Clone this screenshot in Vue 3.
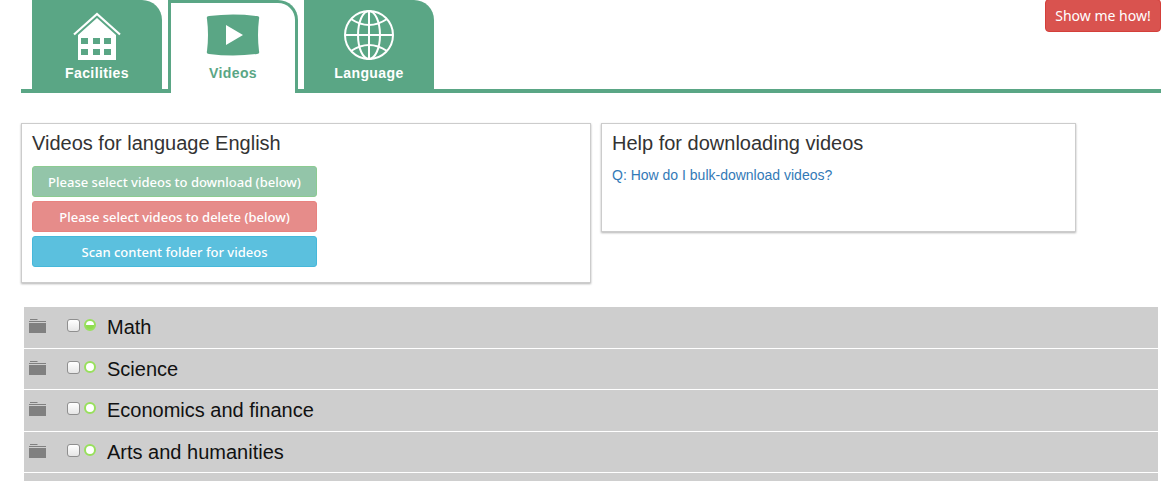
<script setup>
const rows = [
  { name: 'Math', partial: true },
  { name: 'Science', partial: false },
  { name: 'Economics and finance', partial: false },
  { name: 'Arts and humanities', partial: false },
  { name: '', partial: false, hidden: true },
]
</script>

<template>
  <div class="page">
    <header class="header">
      <nav class="tabs">
        <a class="tab">
          <svg class="icon" viewBox="0 0 50 50" width="50" height="50">
            <path d="M2 24.5 L25 4 L48 24.5" fill="none" stroke="#fff" stroke-width="2.2"/>
            <path fill-rule="evenodd" fill="#fff" d="M25 8 L44 25 V50 H6 V25 Z M9 28 v6 h7 v-6 z M21 28 v6 h7 v-6 z M32 28 v6 h7 v-6 z M9 39 v6 h7 v-6 z M21 39 v6 h7 v-6 z M32 39 v6 h7 v-6 z"/>
          </svg>
          <span>Facilities</span>
        </a>
        <a class="tab active">
          <svg class="icon" viewBox="0 0 54 50" width="54" height="50">
            <path fill="#5aa685" d="M3 6 Q27 3 51 6 Q54 6 53 9 Q51 25 53 41 Q54 44 51 44 Q27 47 3 44 Q0 44 1 41 Q3 25 1 9 Q0 6 3 6 Z"/>
            <path fill="#fff" d="M20 15 L37 25 L20 35 Z"/>
          </svg>
          <span>Videos</span>
        </a>
        <a class="tab">
          <svg class="icon" viewBox="0 0 50 50" width="50" height="50">
            <g fill="none" stroke="#fff" stroke-width="2">
              <circle cx="25" cy="25" r="24"/>
              <ellipse cx="25" cy="25" rx="11" ry="24"/>
              <path d="M25 1 V49 M1 25 H49"/>
              <path d="M7 9 Q25 21 43 9"/>
              <path d="M7 41 Q25 29 43 41"/>
            </g>
          </svg>
          <span>Language</span>
        </a>
      </nav>
      <button class="show-me">Show me how!</button>
    </header>

    <section class="panels">
      <div class="panel panel-left">
        <h2>Videos for language English</h2>
        <div class="btns">
          <button class="btn green">Please select videos to download (below)</button>
          <button class="btn red">Please select videos to delete (below)</button>
          <button class="btn blue">Scan content folder for videos</button>
        </div>
      </div>
      <div class="panel panel-right">
        <h2>Help for downloading videos</h2>
        <a class="help-link">Q: How do I bulk-download videos?</a>
      </div>
    </section>

    <ul class="tree">
      <li v-for="(r, i) in rows" :key="i" class="row">
        <svg class="folder" viewBox="0 0 17 15" width="17" height="15">
          <path fill="#808080" d="M1 1 h7 l1 1 h-8z M0 3 h17 v1 h-17z M0 5 h17 v10 h-17z"/>
        </svg>
        <template v-if="!r.hidden">
          <span class="check"></span>
          <span class="dot" :class="{ partial: r.partial }"></span>
          <span class="label">{{ r.name }}</span>
        </template>
      </li>
    </ul>
  </div>
</template>

<style>
html, body { margin: 0; padding: 0; background: #fff; overflow: hidden; }
</style>

<style scoped>
.page {
  width: 1171px;
  height: 481px;
  overflow: hidden;
  box-sizing: border-box;
  padding: 0 10px 0 21px;
  font-family: "Liberation Sans", Arial, sans-serif;
}
.header {
  display: flex;
  justify-content: space-between;
  align-items: flex-start;
  height: 93px;
  box-sizing: border-box;
  border-bottom: 4px solid #5aa685;
}
.tabs {
  display: flex;
  gap: 6px;
  padding-left: 11px;
}
.tab {
  width: 130px;
  height: 89px;
  box-sizing: border-box;
  background: #5aa685;
  border-radius: 0 20px 0 0;
  color: #fff;
  font-weight: 700;
  font-size: 14px;
  letter-spacing: 0.4px;
  display: flex;
  flex-direction: column;
  align-items: center;
  padding-top: 10px;
  padding-right: 0;
}
.tab span { margin-top: 4px; line-height: 18px; }
.tab .icon { display: block; }
.active {
  height: 93px;
  background: #fff;
  color: #5aa685;
  border: 3px solid #5aa685;
  border-bottom: 0;
  border-radius: 0 20px 0 0;
  padding-top: 7px;
  position: relative;
}
.show-me {
  width: 116px;
  height: 33px;
  margin-top: -1px;
  background: #d9534f;
  border: 1px solid #d43f3a;
  border-radius: 4px;
  color: #fff;
  font-family: "Noto Sans", sans-serif;
  font-size: 14px;
  padding: 0;
}
.panels {
  display: flex;
  align-items: flex-start;
  gap: 10px;
  margin-top: 30px;
}
.panel {
  box-sizing: border-box;
  background: #fff;
  border: 1px solid #ccc;
  box-shadow: 0 1px 2px rgba(0, 0, 0, 0.3);
  padding: 7px 10px;
}
.panel h2 {
  margin: 0;
  font-size: 20px;
  font-weight: 400;
  line-height: 24px;
  color: #333;
}
.panel-left { width: 570px; height: 160px; }
.panel-right { width: 475px; height: 109px; }
.btns {
  margin-top: 11px;
  display: flex;
  flex-direction: column;
  gap: 4px;
}
.btn {
  width: 285px;
  height: 31px;
  padding: 0;
  border-radius: 3px;
  color: #fff;
  font-family: "Noto Sans", sans-serif;
  font-weight: 500;
  font-size: 13px;
  border: 1px solid;
}
.green { background: #93c5a9; border-color: #8ccb91; }
.red { background: #e68c8a; border-color: #e8827f; }
.blue { background: #5bc0de; border-color: #46b8da; }
.help-link {
  display: block;
  margin-top: 10px;
  color: #337ab7;
  font-size: 14px;
  line-height: 20px;
}
.tree {
  list-style: none;
  margin: 24px 3px 0 3px;
  padding: 0;
}
.row {
  height: 41.6px;
  box-sizing: border-box;
  background: #cecece;
  border-bottom: 1px solid #fff;
  display: flex;
  align-items: center;
  position: relative;
  padding-left: 5px;
}
.folder { flex: none; margin-top: -3px; }
.check {
  width: 11px;
  height: 11px;
  margin-left: 21px;
  margin-top: -3px;
  border: 1px solid #8f8f8f;
  border-radius: 3px;
  background: linear-gradient(#fff, #e6e6e6);
  flex: none;
}
.dot {
  width: 8px;
  height: 8px;
  margin-left: 4px;
  margin-top: -4px;
  border: 2px solid #98e05c;
  border-radius: 50%;
  background: #fff;
  flex: none;
}
.dot.partial {
  background: linear-gradient(#fff 45%, #8fdc4e 45%);
}
.label {
  margin-left: 11px;
  font-size: 20px;
  color: #111;
  line-height: 24px;
}
</style>
